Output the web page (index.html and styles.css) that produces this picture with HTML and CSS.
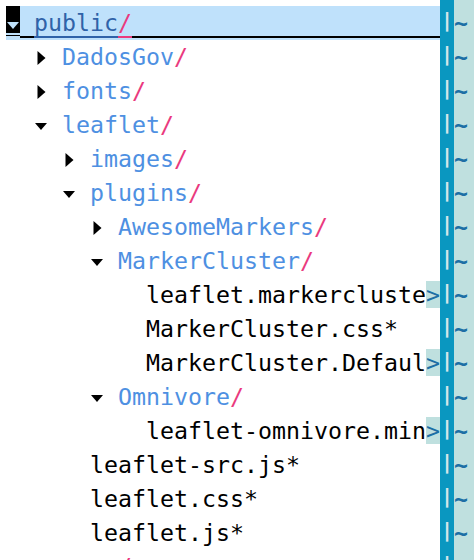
FILE: index.html
```html
<!DOCTYPE html>
<html>
<head>
<meta charset="utf-8">
<link rel="stylesheet" href="styles.css">
</head>
<body>
<div class="screen">
  <div class="tree">
    <div class="row current"><span class="cursor"><svg width="14" height="30" viewBox="0 0 14 30"><polygon points="1,16 13,16 7,23" fill="#bfe1fb"/><rect x="0" y="27" width="14" height="2" fill="#bfe1fb"/></svg></span><span class="ul"> </span><span class="root ul">public</span><span class="slash ul">/</span><span class="ul">                        </span></div>
    <div class="row">  <svg class="tri" viewBox="0 0 14 34"><polygon points="3.5,11 11.5,18 3.5,25"/></svg> <span class="dir">DadosGov</span><span class="slash">/</span></div>
    <div class="row">  <svg class="tri" viewBox="0 0 14 34"><polygon points="3.5,11 11.5,18 3.5,25"/></svg> <span class="dir">fonts</span><span class="slash">/</span></div>
    <div class="row">  <svg class="tri" viewBox="0 0 14 34"><polygon points="1,15 13,15 7,22"/></svg> <span class="dir">leaflet</span><span class="slash">/</span></div>
    <div class="row">    <svg class="tri" viewBox="0 0 14 34"><polygon points="3.5,11 11.5,18 3.5,25"/></svg> <span class="dir">images</span><span class="slash">/</span></div>
    <div class="row">    <svg class="tri" viewBox="0 0 14 34"><polygon points="1,15 13,15 7,22"/></svg> <span class="dir">plugins</span><span class="slash">/</span></div>
    <div class="row">      <svg class="tri" viewBox="0 0 14 34"><polygon points="3.5,11 11.5,18 3.5,25"/></svg> <span class="dir">AwesomeMarkers</span><span class="slash">/</span></div>
    <div class="row">      <svg class="tri" viewBox="0 0 14 34"><polygon points="1,15 13,15 7,22"/></svg> <span class="dir">MarkerCluster</span><span class="slash">/</span></div>
    <div class="row">          leaflet.markercluste<span class="trunc">&gt;</span></div>
    <div class="row">          MarkerCluster.css*</div>
    <div class="row">          MarkerCluster.Defaul<span class="trunc">&gt;</span></div>
    <div class="row">      <svg class="tri" viewBox="0 0 14 34"><polygon points="1,15 13,15 7,22"/></svg> <span class="dir">Omnivore</span><span class="slash">/</span></div>
    <div class="row">          leaflet-omnivore.min<span class="trunc">&gt;</span></div>
    <div class="row">      leaflet-src.js*</div>
    <div class="row">      leaflet.css*</div>
    <div class="row">      leaflet.js*</div>
    <div class="row">  <svg class="tri" viewBox="0 0 14 34"><polygon points="3.5,11 11.5,18 3.5,25"/></svg> <span class="dir">scss</span><span class="slash">/</span></div>
  </div>
  <div class="split">
    <div class="srow">|</div><div class="srow">|</div><div class="srow">|</div><div class="srow">|</div>
    <div class="srow">|</div><div class="srow">|</div><div class="srow">|</div><div class="srow">|</div>
    <div class="srow">|</div><div class="srow">|</div><div class="srow">|</div><div class="srow">|</div>
    <div class="srow">|</div><div class="srow">|</div><div class="srow">|</div><div class="srow">|</div>
    <div class="srow">|</div>
  </div>
  <div class="pane">
    <div class="prow">~</div><div class="prow">~</div><div class="prow">~</div><div class="prow">~</div>
    <div class="prow">~</div><div class="prow">~</div><div class="prow">~</div><div class="prow">~</div>
    <div class="prow">~</div><div class="prow">~</div><div class="prow">~</div><div class="prow">~</div>
    <div class="prow">~</div><div class="prow">~</div><div class="prow">~</div><div class="prow">~</div>
    <div class="prow">~</div>
  </div>
</div>
</body>
</html>
```
FILE: styles.css
```css
html, body {
  margin: 0;
  padding: 0;
  background: #ffffff;
  overflow: hidden;
}

.screen {
  display: grid;
  grid-template-columns: 440px 14px 20px;
  width: 474px;
  height: 560px;
  overflow: hidden;
  font-family: "DejaVu Sans Mono", "Liberation Mono", monospace;
  font-size: 23.25px;
}

.tree {
  padding: 6px 0 0 6px;
  background: #ffffff;
  color: #000000;
}

.row {
  height: 34px;
  line-height: 34px;
  white-space: pre;
}

.row.current {
  background: #bfe1fb;
}

.cursor {
  display: inline-block;
  width: 14px;
  height: 30px;
  background: #000000;
  vertical-align: top;
}

.cursor svg {
  display: block;
}

.ul {
  text-decoration: underline;
  text-decoration-thickness: 2px;
  text-underline-offset: 5px;
  text-decoration-color: #000000;
}

.root {
  color: #2f62a8;
  text-decoration-color: #2f62a8;
}

.slash {
  color: #ea3a7e;
}

.slash.ul {
  text-decoration-color: #ea3a7e;
}

.dir {
  color: #4e90e2;
}

.tri {
  display: inline-block;
  width: 14px;
  height: 34px;
  vertical-align: top;
  fill: #000000;
}

.trunc {
  background: #bfe0df;
  color: #1d6fa5;
}

.split {
  background: #0a97c0;
  padding-top: 6px;
}

.srow {
  height: 34px;
  line-height: 29px;
  font-size: 20px;
  font-weight: bold;
  color: #d5e5ea;
  text-align: center;
}

.pane {
  background: #bfe0df;
  padding-top: 6px;
}

.prow {
  height: 34px;
  line-height: 34px;
  font-weight: bold;
  color: #1d6fa5;
  white-space: pre;
}
```
